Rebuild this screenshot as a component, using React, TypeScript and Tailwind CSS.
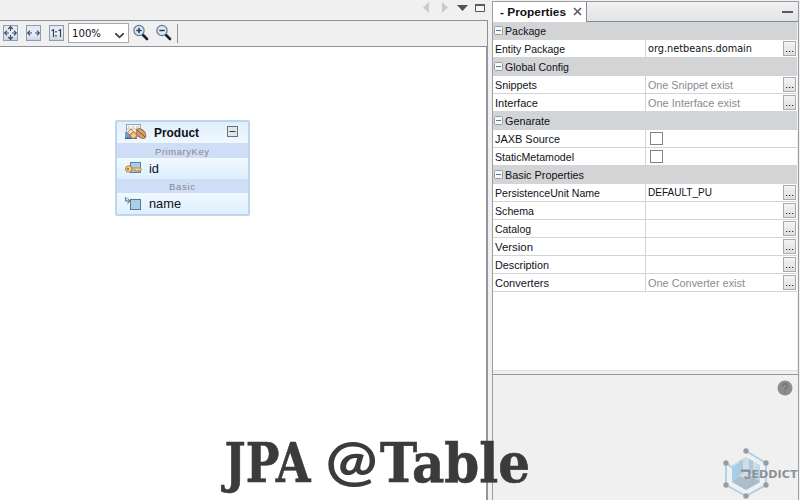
import type { ReactNode } from "react";

const ui = "font-['Liberation_Sans',Arial,sans-serif]";

function Label({ text, width, size = 11, bold = false, color = "#111116", family = "Liberation Sans", dy = 0, height = 18, spaced = false }: {
  text: string; width: number; size?: number; bold?: boolean; color?: string; family?: string; dy?: number; height?: number; spaced?: boolean;
}) {
  return (
    <svg width={width} height={height} className="block shrink-0 overflow-visible">
      <text x="0" y={12.5 + dy} fontSize={size} fontFamily={`"${family}", sans-serif`} fontWeight={bold ? 700 : 400}
        fill={color} textLength={width} lengthAdjust={spaced ? "spacing" : "spacingAndGlyphs"}>{text}</text>
    </svg>
  );
}

function Group({ text, width }: { text: string; width: number }) {
  return (
    <div className="flex h-[18px] items-start bg-[#d3d4d6] pl-[1px]">
      <svg width="9" height="9" className="mt-[4px] mr-[2px] block shrink-0">
        <rect x=".5" y=".5" width="8" height="8" rx="1" fill="#f7f8f8" stroke="#979ca1" />
        <path d="M2 4.5h5" stroke="#4779a8" />
      </svg>
      <Label text={text} width={width} dy={0.5} />
    </div>
  );
}

function Dots() {
  return (
    <div className="mt-[1px] mr-[1px] h-[15px] w-[13px] shrink-0 border border-[#a9abad] bg-linear-to-b from-[#f4f4f4] to-[#dedfdf]">
      <svg width="11" height="13" className="block"><path d="M2 9.5h1.3M5 9.5h1.3M8 9.5h1.3" stroke="#333" strokeWidth="1.2" /></svg>
    </div>
  );
}

function Row({ text, width, children, dots = true }: { text: string; width: number; children?: ReactNode; dots?: boolean }) {
  return (
    <div className="flex h-[18px] border-b border-[#d3d4d6] bg-white">
      <div className="w-[153px] shrink-0 border-r border-[#d3d4d6] pl-[2px]"><Label text={text} width={width} dy={0.5} /></div>
      <div className="flex-1 pl-[2px]">{children}</div>
      {dots && <Dots />}
    </div>
  );
}

function Check() {
  return <div className="mt-[2px] ml-[2px] h-[13px] w-[13px] border border-[#7d8389] bg-white" />;
}

function FitIcon({ kind }: { kind: "all" | "width" | "one" }) {
  return (
    <svg width="15" height="16" viewBox="0 0 15 16" className="block shrink-0">
      <defs><linearGradient id={`fit-${kind}`} x1="0" y1="0" x2="0" y2="1"><stop stopColor="#dfe7f1" /><stop offset=".55" stopColor="#eaf0f6" /><stop offset="1" stopColor="#c8d3df" /></linearGradient></defs>
      <rect x=".5" y=".5" width="14" height="15" fill={`url(#fit-${kind})`} stroke="#8f9baa" />
      {kind === "one" ? (
        <g fill="none" stroke="#35425b" strokeWidth="1.2"><path d="M2.5 5.7l2-1V12M9.5 5.7l2-1V12" /><path d="M7 6v1.5M7 10v1.5" strokeWidth="1.4" /></g>
      ) : (
        <g fill="none" stroke="#3c4d6b" strokeWidth="1.2">
          <path d="M6 8H1.7M4 5.7L1.7 8 4 10.3M9 8h4.3M11 5.7L13.3 8 11 10.3" />
          {kind === "all" && <path d="M7.5 6V1.7M5.2 4L7.5 1.7 9.8 4M7.5 10v4.3M5.2 12l2.3 2.3L9.8 12" />}
        </g>
      )}
    </svg>
  );
}

function Magnifier({ plus = false }: { plus?: boolean }) {
  return (
    <svg width="17" height="18" viewBox="0 0 17 18" className="block shrink-0">
      <path d="M10 11l4 4" stroke="#20242a" strokeWidth="2.7" strokeLinecap="round" />
      <circle cx="6" cy="6.5" r="5.1" fill="#d9e8f5" stroke="#64778e" strokeWidth="1.2" />
      <path d="M3.3 6.5h5.4" stroke="#25354d" strokeWidth="1.4" />
      {plus && <path d="M6 3.8v5.4" stroke="#25354d" strokeWidth="1.4" />}
    </svg>
  );
}

function Toolbar() {
  return (
    <div className="flex h-[27px] w-[488px] border-y border-r border-[#8c929a] bg-[#f0f0f0] pl-[3px]">
      <div className="mt-[4px] flex gap-[8px]"><FitIcon kind="all" /><FitIcon kind="width" /><FitIcon kind="one" /></div>
      <div className="mt-[2px] ml-[4px] flex h-[20px] w-[61px] border border-[#a8a8a8] bg-white pl-[3px]">
        <Label text="100%" width={29} family="DejaVu Sans Condensed" size={11.3} dy={0.7} />
        <svg width="9" height="7" className="mt-[8px] ml-[14px] block"><path d="M1 1v1l3.5 3.3L8 2V1" fill="none" stroke="#45484b" strokeWidth="1.8" /></svg>
      </div>
      <div className="mt-[3px] ml-[4px] flex gap-[6px]"><Magnifier plus /><Magnifier /></div>
      <div className="mt-[3px] ml-[4px] h-[19px] w-px bg-[#8e9297]" />
    </div>
  );
}

function EntityCard() {
  return (
    <div className="absolute top-[120px] left-[115px] h-[96px] w-[135px] rounded-[2px] border-2 border-[#bdd5ee] bg-[#e8f4fe]">
      <div className="flex h-[21px] bg-linear-to-b from-[#e0eff8] to-[#f0f8ff]">
        <svg width="24" height="16" viewBox="0 0 24 16" className="mt-[2px] ml-[7px] block shrink-0">
          <rect x="2.5" y=".5" width="14" height="12" fill="#f6f6f6" stroke="#9ba5ab" />
          <path d="M4 3h2m2 0h2m2 0h3M3 5h13" stroke="#b3bdc7" />
          <path d="M1 8h6v6H1z" fill="#6d9fc9" />
          <path d="M1 13.5h12v1.5H1z" fill="#476b89" />
          <path d="M7 5l3.5 3.5L7 12 3.5 8.5z" fill="#fae0ae" stroke="#b87642" />
          <circle cx="9.5" cy="11.5" r="3" fill="#f3ca91" stroke="#ad6c3c" />
          <ellipse cx="17" cy="9.5" rx="3.6" ry="5.8" transform="rotate(-45 17 9.5)" fill="#d2a375" stroke="#9a673f" />
          <path d="M13 6.5c2 0 2 3 4 3s2 3 4 3" fill="none" stroke="#875632" />
        </svg>
        <div className="mt-[1px] ml-[6px]"><Label text="Product" width={45} size={13} bold dy={1.7} /></div>
        <svg width="11" height="11" className="mt-[4px] ml-[28px] block"><rect x=".5" y=".5" width="10" height="10" fill="#dfe7ec" stroke="#69737a" /><path d="M2.5 5.5h6" stroke="#303940" /></svg>
      </div>
      <div className="flex h-[15px] bg-[#cfddf7] pl-[38px]"><Label text="PrimaryKey" width={54} size={9.5} color="#85898f" height={15} dy={-0.7} spaced /></div>
      <div className="flex h-[21px] bg-linear-to-b from-[#f2f9ff] to-[#dceffd]">
        <svg width="18" height="14" viewBox="0 0 18 14" className="mt-[3px] ml-[8px] block shrink-0">
          <rect x="5.5" y="1.5" width="10" height="10" fill="#a9cbe7" stroke="#5f829b" />
          <path d="M7 7h9v3h-2V9h-1v2h-2V9H7" fill="#f8d69c" stroke="#b17b3c" strokeWidth=".8" />
          <circle cx="3.8" cy="8" r="3.2" fill="#f6cd8b" stroke="#b47b39" /><circle cx="3" cy="8" r="1" fill="#8b643a" />
        </svg>
        <div className="ml-[6px] mt-[1px]"><Label text="id" width={10} size={13} dy={1.4} /></div>
      </div>
      <div className="flex h-[14px] bg-[#cfddf7] pl-[52px]"><Label text="Basic" width={26} size={9.5} color="#85898f" height={14} dy={-1.3} spaced /></div>
      <div className="flex h-[21px] bg-linear-to-b from-[#f0f8ff] to-[#deefff]">
        <svg width="17" height="15" viewBox="0 0 17 15" className="mt-[3px] ml-[8px] block shrink-0">
          <path d="M.7 1v4h3.5M2.5 2.5L4.8 5 2.5 7.5" fill="none" stroke="#476887" />
          <rect x="5.5" y="3.5" width="10" height="10" fill="#aad0e5" stroke="#587a8c" />
        </svg>
        <div className="ml-[7px] mt-[1px]"><Label text="name" width={32} size={13} dy={1.4} /></div>
      </div>
    </div>
  );
}

function Properties() {
  return (
    <section className="mt-[1px] ml-[4px] flex h-[499px] w-[307px] flex-col border-x border-t border-[#999da4] bg-[#f0f0f0]">
      <header className="flex h-[20px] shrink-0">
        <div className="flex w-[94px] border-r border-[#858b93] bg-white pl-[7px]">
          <Label text="- Properties" width={66} size={11.5} bold dy={1.7} />
          <svg width="9" height="9" className="mt-[5px] ml-[7px] block"><path d="M1 1l7 7M8 1L1 8" stroke="#565a65" strokeWidth="1.6" /></svg>
        </div>
        <div className="flex flex-1 justify-end border-b border-[#858b93] bg-linear-to-b from-[#f2f2f2] to-[#e3e3e3] pr-[5px]">
          <div className="mt-[9px] h-[2px] w-[11px] bg-[#535966]" />
        </div>
      </header>
      <div className="h-[348px] shrink-0 border-r border-[#f0f0f0] bg-white">
        <Group text="Package" width={41} />
        <Row text="Entity Package" width={70}><Label text="org.netbeans.domain" width={104} family="DejaVu Sans Condensed" size={10.5} dy={-0.5} /></Row>
        <Group text="Global Config" width={64} />
        <Row text="Snippets" width={42}><Label text="One Snippet exist" width={85} color="#898b8e" /></Row>
        <Row text="Interface" width={43}><Label text="One Interface exist" width={92} color="#898b8e" /></Row>
        <Group text="Genarate" width={45} />
        <Row text="JAXB Source" width={65} dots={false}><Check /></Row>
        <Row text="StaticMetamodel" width={79} dots={false}><Check /></Row>
        <Group text="Basic Properties" width={79} />
        <Row text="PersistenceUnit Name" width={105}><Label text="DEFAULT_PU" width={64} dy={-0.5} /></Row>
        <Row text="Schema" width={39} />
        <Row text="Catalog" width={36} />
        <Row text="Version" width={38} />
        <Row text="Description" width={54} />
        <Row text="Converters" width={54}><Label text="One Converter exist" width={97} color="#898b8e" /></Row>
      </div>
      <div className="h-[5px] shrink-0 border-t border-b border-t-[#dfdfdf] border-b-[#96999d]" />
      <div className="flex justify-end pr-[5px]">
        <svg width="16" height="16" viewBox="0 0 16 16" className="mt-[5px] block"><circle cx="8" cy="8" r="7.5" fill="#8d8d8d" /><path d="M5.7 6.2c0-3.3 4.8-3 4.8-.3 0 2-2.4 2-2.4 4M8.1 11.4v1.3" fill="none" stroke="#737373" strokeWidth="1.6" /></svg>
      </div>
    </section>
  );
}

function Watermark() {
  return (
    <svg width="76" height="53" viewBox="0 0 76 53" className="absolute top-[447px] left-[722px] block">
      <defs><linearGradient id="gem" x1="0" y1="0" x2="1" y2="1"><stop stopColor="#c4dfee" /><stop offset=".5" stopColor="#cfdde6" /><stop offset="1" stopColor="#a9d1ea" /></linearGradient></defs>
      <path d="M24 4l20 12v22L24 49 4 38V16l7 5" fill="none" stroke="#a7cfee" strokeWidth="1.8" />
      <path d="M24 10l14 8v17l-14 8-14-8V18z" fill="url(#gem)" />
      <path d="M10 20l7-4v14l-7 5z" fill="#a4cfe9" />
      <path d="M17 14l4-2v14l-4 2zM27 12l4 2v13h-4z" fill="#a9bfcd" opacity=".75" />
      <path d="M10 35l8-6 6 3 6-3 8 6-14 8z" fill="#a4b3bd" opacity=".75" />
      {[[24, 4], [44, 16], [44, 38], [24, 49], [4, 38], [4, 16]].map(([x, y]) => <circle key={`${x}-${y}`} cx={x} cy={y} r="2.7" fill="#989da2" />)}
      <rect x="19" y="22.5" width="8" height="2.3" fill="#858e96" />
      <text x="22" y="32.2" fontFamily="Liberation Sans" fontWeight="700" fontSize="13.5" fill="#858e96" textLength="7" lengthAdjust="spacingAndGlyphs">J</text>
      <text x="29.5" y="31.2" fontFamily="DejaVu Sans" fontWeight="700" fontSize="11" fill="#8d9298" textLength="46" lengthAdjust="spacingAndGlyphs">EDDICT</text>
    </svg>
  );
}

function Caption() {
  return (
    <svg width="320" height="70" className="absolute top-[430px] left-[215px] block overflow-visible" fill="#3b3b3c" stroke="#3b3b3c" strokeWidth=".6" fontFamily='"DejaVu Serif Condensed", "DejaVu Serif", serif' fontWeight="700" fontSize="55">
      <text x="9.5" y="52" textLength="86" lengthAdjust="spacingAndGlyphs">JPA</text>
      <text x="110.5" y="50" fontFamily="Lato, sans-serif" fontSize="55" textLength="52" lengthAdjust="spacingAndGlyphs" stroke="none">@</text>
      <text x="165" y="52" textLength="150" lengthAdjust="spacingAndGlyphs">Table</text>
    </svg>
  );
}

export default function App() {
  return (
    <main className={`relative flex h-[500px] w-[800px] overflow-hidden bg-[#f0f0f0] ${ui}`}>
      <section className="flex w-[488px] shrink-0 flex-col">
        <div className="flex h-[20px] shrink-0 justify-end pr-[2px]">
          <svg width="64" height="16" viewBox="0 0 64 16" className="block">
            <path d="M7 2v11L1 7.5zM20 2v11l6-5.5z" fill="#c9cbcd" />
            <path d="M35 5h11l-5.5 6z" fill="#4c515b" />
            <path d="M53.5 4.5h9v7h-9z" fill="#f5f5f5" stroke="#555965" /><path d="M53 5h10" stroke="#555965" strokeWidth="2" />
          </svg>
        </div>
        <Toolbar />
        <div className="flex-1 border-r-2 border-[#92969c] bg-white" />
      </section>
      <Properties />
      <EntityCard />
      <Watermark />
      <Caption />
    </main>
  );
}
